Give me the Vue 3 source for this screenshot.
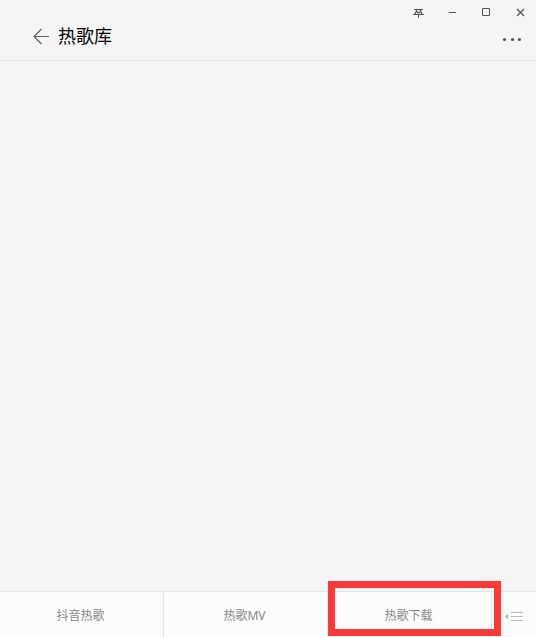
<script setup>
const tabs = [
  { label: '抖音热歌', marked: false },
  { label: '热歌MV', marked: false },
  { label: '热歌下载', marked: true },
]
</script>

<template>
  <div class="window">
    <header class="header">
      <div class="controls">
        <button class="control" type="button" aria-label="Pin">
          <svg width="13" height="13" viewBox="0 0 13 13" fill="none" stroke="#555">
            <path d="M2 3.5H11M1 8.5H12M6.5 9V12" />
            <path d="M4.9 4L3 8.2M8.1 4L10 8.2M5 6.5H8" stroke-width="1.4" />
          </svg>
        </button>
        <button class="control" type="button" aria-label="Minimize">
          <svg width="13" height="13" viewBox="0 0 13 13" fill="none" stroke="#555">
            <path d="M3 6.5H10" />
          </svg>
        </button>
        <button class="control" type="button" aria-label="Maximize">
          <svg width="13" height="13" viewBox="0 0 13 13" fill="none" stroke="#555">
            <path d="M2.5 2.5H9.5V9.5H2.5Z" />
          </svg>
        </button>
        <button class="control" type="button" aria-label="Close">
          <svg width="13" height="13" viewBox="0 0 13 13" fill="none" stroke="#555" stroke-width="1.3">
            <path d="M3 3L10 10M10 3L3 10" />
          </svg>
        </button>
      </div>
      <div class="titlebar">
        <button class="back" type="button" aria-label="Back">
          <svg width="17" height="17" viewBox="0 0 17 17" fill="none" stroke="#606060" stroke-width="1.2">
            <path d="M1 8.5H16M8.5 1L1 8.5L8.5 16" />
          </svg>
        </button>
        <h1 class="title">热歌库</h1>
        <button class="more" type="button" aria-label="More">
          <svg width="19" height="5" viewBox="0 0 19 5" fill="#555">
            <circle cx="2.5" cy="2.5" r="1.6" />
            <circle cx="10.5" cy="2.5" r="1.6" />
            <circle cx="17.4" cy="2.5" r="1.6" />
          </svg>
        </button>
      </div>
    </header>

    <main class="content"></main>

    <nav class="menu">
      <button
        v-for="tab in tabs"
        :key="tab.label"
        class="tab"
        :class="{ marked: tab.marked }"
        type="button"
      >{{ tab.label }}</button>
      <button class="toggle" type="button" aria-label="Toggle menu">
        <svg width="19" height="11" viewBox="0 0 19 11">
          <path d="M0 5.5L3 3V8Z" fill="#aaa" />
          <path d="M6 1.5H18M6 5.5H18M6 9.5H18" fill="none" stroke="#b8b8b8" />
        </svg>
      </button>
    </nav>
  </div>
</template>

<style>
body {
  background: #f5f5f5;
}
</style>

<style scoped>
.window {
  display: flex;
  flex-direction: column;
  min-height: 100vh;
  overflow: hidden;
  background: #f5f5f5;
  font-family: "Noto Sans", "Noto Sans CJK SC", sans-serif;
}

button {
  display: flex;
  align-items: center;
  justify-content: center;
  padding: 0;
  border: 0;
  background: none;
  font-family: inherit;
}

svg {
  display: block;
}

.header {
  border-bottom: 1px solid #e4e4e4;
}

.controls {
  display: flex;
  gap: 3px;
  justify-content: flex-end;
}

.control {
  width: 31px;
  height: 24px;
  padding-top: 1px;
}

.titlebar {
  display: flex;
  align-items: center;
  height: 24px;
  padding: 0 15px 12px 32px;
}

.back {
  width: 18px;
  height: 24px;
  padding-top: 1px;
}

.title {
  margin: 0 0 0 8px;
  color: #000;
  font-size: 18px;
  font-weight: 400;
  line-height: 24px;
}

.more {
  height: 24px;
  margin-left: auto;
  padding-top: 7px;
}

.content {
  flex: 1;
}

.menu {
  display: grid;
  grid-template-columns: repeat(3, 1fr) 44px;
  height: 45px;
  border-top: 1px solid #e4e4e4;
  background: #fcfcfc;
}

.tab {
  position: relative;
  padding: 3px 2px 0 0;
  border-right: 1px solid #e4e4e4;
  color: #888;
  font-size: 12px;
  line-height: 18px;
}

.marked::after {
  content: "";
  position: absolute;
  top: -11px;
  right: -10px;
  bottom: 1px;
  left: 0;
  border: 7px solid #fc3838;
}

.toggle {
  padding-top: 4px;
}
</style>
